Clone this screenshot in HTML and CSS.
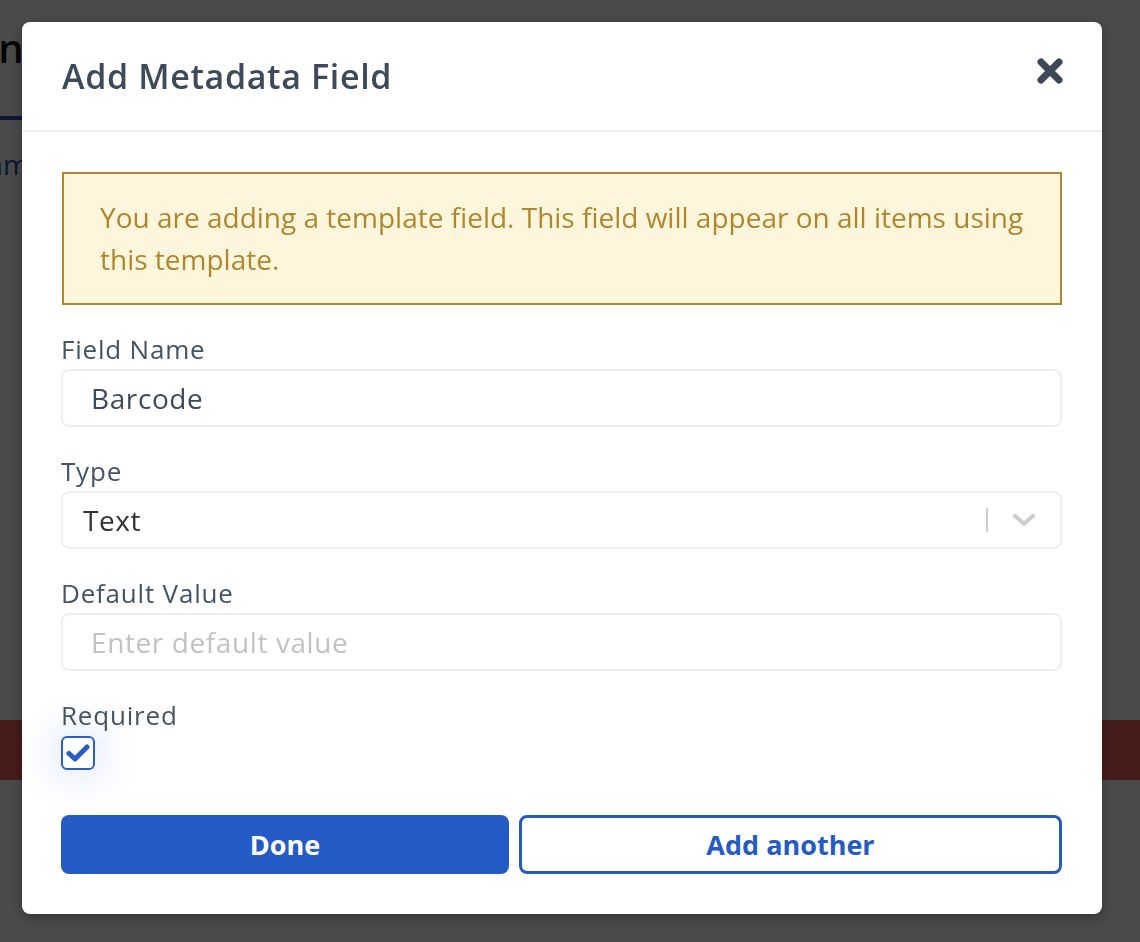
FILE: index.html
```html
<!DOCTYPE html>
<html lang="en">
<head>
<meta charset="utf-8">
<title>Add Metadata Field</title>
<link rel="stylesheet" href="styles.css">
</head>
<body>
<div class="page">
  <h1 class="page-title">In</h1>
  <div class="tabs"><span class="tab active"></span></div>
  <div class="tab-link">Samples</div>
  <div class="danger-bar"></div>
</div>

<div class="overlay">
  <div class="modal">
    <div class="modal-header">
      <h2 class="modal-title">Add Metadata Field</h2>
      <button class="close-btn" aria-label="Close">
        <svg width="26" height="26" viewBox="0 0 26 26"><path d="M4 4 L22 22 M22 4 L4 22" stroke="#3d4756" stroke-width="7" stroke-linecap="round"/></svg>
      </button>
    </div>
    <div class="modal-body">
      <div class="alert">You are adding a template field. This field will appear on all items using this template.</div>

      <div class="field">
        <label class="label">Field Name</label>
        <div class="input"><span class="value">Barcode</span></div>
      </div>

      <div class="field">
        <label class="label">Type</label>
        <div class="select">
          <span class="select-value">Text</span>
          <span class="select-sep"></span>
          <svg class="chevron" width="24" height="14" viewBox="0 0 24 14"><path d="M3 3 L12 11 L21 3" fill="none" stroke="#cccccc" stroke-width="4" stroke-linecap="round" stroke-linejoin="round"/></svg>
        </div>
      </div>

      <div class="field">
        <label class="label">Default Value</label>
        <div class="input"><span class="placeholder">Enter default value</span></div>
      </div>

      <div class="field check-field">
        <label class="label">Required</label>
        <div class="checkbox">
          <svg width="24" height="20" viewBox="0 0 24 20"><path d="M3 10.5 L9 16 L21 4" fill="none" stroke="#2a5bc5" stroke-width="5" stroke-linecap="round" stroke-linejoin="round"/></svg>
        </div>
      </div>

      <div class="actions">
        <button class="btn btn-primary">Done</button>
        <button class="btn btn-outline">Add another</button>
      </div>
    </div>
  </div>
</div>
</body>
</html>
```

FILE: styles.css
```css
* { box-sizing: border-box; }

html, body {
  margin: 0;
  padding: 0;
  width: 1140px;
  height: 942px;
  overflow: hidden;
}

body {
  background: #ffffff;
  font-family: "Open Sans", "Noto Sans", sans-serif;
  color: #3e4a5a;
}

/* underlying page (dimmed by overlay) */
.page {
  padding-top: 26px;
}
.page-title {
  margin: 0 0 0 -14px;
  font-size: 40px;
  font-weight: 600;
  color: #111111;
  line-height: 44px;
}
.tabs {
  margin-top: 46px;
  display: flex;
}
.tab {
  display: block;
  width: 120px;
  height: 4px;
  background: #2a4fb0;
}
.tab-link {
  margin: 24px 0 0 -28px;
  font-size: 28px;
  color: #2a4fb0;
  line-height: 40px;
}
.danger-bar {
  margin-top: 536px;
  height: 60px;
  background: #ef605e;
}

.overlay {
  position: fixed;
  inset: 0;
  background: rgba(0, 0, 0, 0.71);
  padding: 22px;
  display: flex;
  align-items: flex-start;
}

.modal {
  width: 1080px;
  background: #ffffff;
  border-radius: 8px;
  box-shadow: 0 4px 14px rgba(0, 0, 0, 0.3);
}

.modal-header {
  height: 110px;
  padding: 0 40px;
  display: flex;
  align-items: center;
  justify-content: space-between;
  border-bottom: 2px solid #eeeef4;
}
.modal-title {
  margin: 0;
  font-size: 34px;
  font-weight: 600;
  color: #3e4a5a;
  letter-spacing: 0.65px;
}
.close-btn {
  border: 0;
  background: none;
  padding: 0;
  width: 26px;
  height: 26px;
  margin-top: -10px;
  margin-right: -1px;
  display: flex;
}

.modal-body {
  padding: 40px 40px 40px 39px;
}

.alert {
  background: #fdf6dc;
  border: 2px solid #b0872e;
  color: #b0862c;
  font-size: 28px;
  line-height: 42px;
  padding: 22px 36px 23px 36px;
  margin-bottom: 25px;
  margin-left: 1px;
}

.field {
  margin-bottom: 25px;
}
.label {
  display: block;
  font-size: 26px;
  line-height: 39px;
  letter-spacing: 0.8px;
  color: #465363;
}

.input, .select {
  height: 58px;
  border: 2px solid #eeeef4;
  border-radius: 8px;
  display: flex;
  align-items: center;
  font-size: 28px;
  letter-spacing: 0.6px;
}
.input {
  padding: 0 28px;
}
.value { color: #3f4a5a; }
.placeholder { color: #c2c2c6; }

.select {
  padding: 0 24px 0 20px;
}
.select-value {
  flex: 1;
  color: #333333;
}
.select-sep {
  width: 2px;
  height: 24px;
  background: #cccccc;
  margin-right: 24px;
}
.chevron { display: block; }

.check-field { margin-bottom: 45px; }
.checkbox {
  width: 34px;
  height: 34px;
  margin-top: 1px;
  border: 2px solid #2a5ec9;
  border-radius: 6px;
  display: flex;
  align-items: center;
  justify-content: center;
  box-shadow: 0 0 30px 14px rgba(70, 120, 235, 0.10);
  background: #ffffff;
}

.actions {
  display: grid;
  grid-template-columns: 448fr 543fr;
  gap: 10px;
}
.btn {
  height: 59px;
  border-radius: 8px;
  font-family: inherit;
  font-size: 27px;
  font-weight: 700;
  cursor: pointer;
}
.btn-primary {
  background: #255bc4;
  color: #ffffff;
  border: 0;
}
.btn-outline {
  background: #ffffff;
  color: #255bc4;
  border: 3px solid #255bc4;
}
```
